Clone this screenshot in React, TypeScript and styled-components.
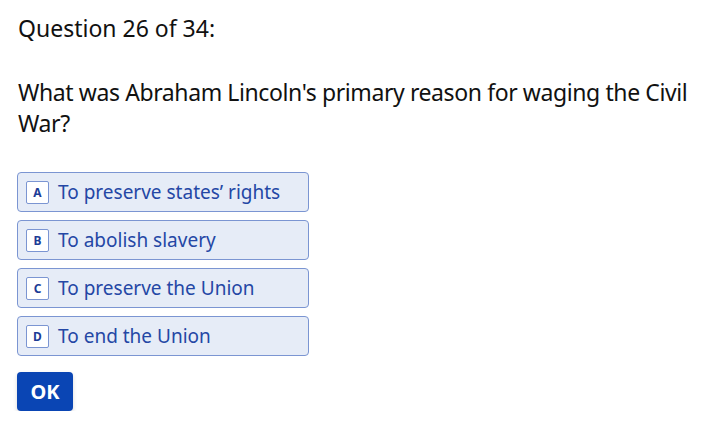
import React from "react";
import styled, { createGlobalStyle } from "styled-components";

const Global = createGlobalStyle`
  html, body { margin: 0; padding: 0; background: #ffffff; }
  body { font-family: "Noto Sans", "Open Sans", sans-serif; }
`;

const Page = styled.div`
  padding: 12px 0 0 17px;
  display: flex;
  flex-direction: column;
`;

const Counter = styled.div`
  font-size: 23px;
  line-height: 32px;
  color: #111111;
  padding-left: 1px;
`;

const Prompt = styled.div`
  margin-top: 33px;
  font-size: 23px;
  line-height: 31px;
  letter-spacing: -0.4px;
  color: #111111;
  padding-left: 1px;
`;

const Options = styled.div`
  margin-top: 33px;
  display: flex;
  flex-direction: column;
  gap: 8px;
`;

const Option = styled.div`
  box-sizing: border-box;
  width: 292px;
  height: 40px;
  display: flex;
  align-items: center;
  gap: 9px;
  padding-left: 8px;
  background: #e6ecf7;
  border: 1px solid #7b95d2;
  border-radius: 4px;
  color: #2447a5;
  font-size: 19px;
`;

const Key = styled.span`
  box-sizing: border-box;
  width: 23px;
  height: 23px;
  display: flex;
  align-items: center;
  justify-content: center;
  background: #ffffff;
  border: 1px solid #7b95d2;
  border-radius: 2px;
  font-size: 12px;
  font-weight: 700;
  color: #1d3c96;
`;

const OkButton = styled.button`
  margin-top: 16px;
  align-self: flex-start;
  width: 56px;
  height: 39px;
  border: none;
  border-radius: 4px;
  background: #0a45b4;
  color: #ffffff;
  font-family: "Noto Sans", sans-serif;
  font-weight: 700;
  font-size: 20px;
  box-shadow: 0 2px 4px rgba(0, 0, 0, 0.15);
  padding: 0;
`;

const options = [
  ["A", "To preserve states’ rights"],
  ["B", "To abolish slavery"],
  ["C", "To preserve the Union"],
  ["D", "To end the Union"],
];

export default function App() {
  return (
    <>
      <Global />
      <Page>
        <Counter>Question 26 of 34:</Counter>
        <Prompt>
          What was Abraham Lincoln's primary reason for waging the Civil War?
        </Prompt>
        <Options>
          {options.map(([k, t]) => (
            <Option key={k}>
              <Key>{k}</Key>
              {t}
            </Option>
          ))}
        </Options>
        <OkButton>OK</OkButton>
      </Page>
    </>
  );
}
